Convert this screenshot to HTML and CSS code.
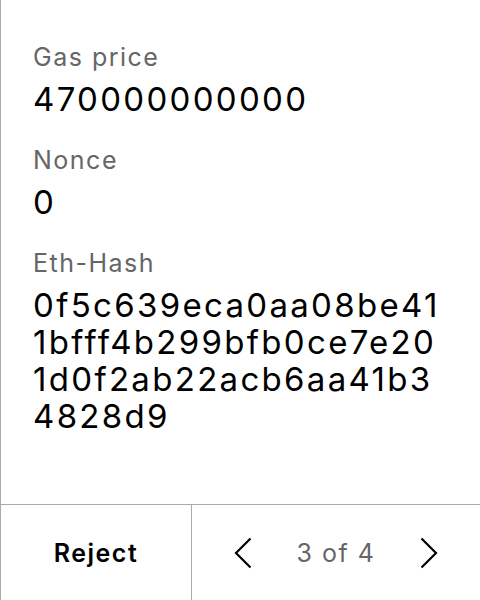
FILE: index.html
```html
<!DOCTYPE html>
<html lang="en">
<head>
<meta charset="utf-8">
<title>Transaction details</title>
<link rel="stylesheet" href="styles.css">
</head>
<body>
<div class="screen">
  <main class="details">
    <div class="field">
      <div class="label">Gas price</div>
      <div class="value">470000000000</div>
    </div>
    <div class="field">
      <div class="label">Nonce</div>
      <div class="value">0</div>
    </div>
    <div class="field">
      <div class="label">Eth-Hash</div>
      <div class="value hash">0f5c639eca0aa08be411bfff4b299bfb0ce7e201d0f2ab22acb6aa41b34828d9</div>
    </div>
  </main>
  <footer class="actions">
    <button class="reject">Reject</button>
    <div class="pager">
      <button class="nav" aria-label="Previous">
        <svg width="18" height="32" viewBox="0 0 18 32"><path d="M16.5 1.5 L2 16 L16.5 30.5" fill="none" stroke="#000" stroke-width="2.2"/></svg>
      </button>
      <span class="count">3 of 4</span>
      <button class="nav" aria-label="Next">
        <svg width="18" height="32" viewBox="0 0 18 32"><path d="M1.5 1.5 L16 16 L1.5 30.5" fill="none" stroke="#000" stroke-width="2.2"/></svg>
      </button>
    </div>
  </footer>
</div>
</body>
</html>
```
FILE: styles.css
```css
* { box-sizing: border-box; }
html, body {
  margin: 0;
  padding: 0;
  background: #fff;
}
body {
  font-family: Inter, "Noto Sans", sans-serif;
  color: #000;
}
.screen {
  width: 480px;
  height: 600px;
  display: flex;
  flex-direction: column;
  border-left: 1px solid #aaa;
}
.details {
  flex: 1;
  padding: 42px 30px 0 32px;
}
.field {
  margin-bottom: 27px;
}
.label {
  font-size: 25px;
  line-height: 30px;
  letter-spacing: 0.06em;
  color: #666;
  margin-bottom: 9px;
}
.value {
  font-size: 33px;
  line-height: 37px;
  letter-spacing: 0.07em;
  color: #000;
}
.hash {
  word-break: break-all;
}
.actions {
  height: 96px;
  border-top: 1px solid #aaa;
  display: flex;
}
button {
  font-family: inherit;
  background: none;
  border: 0;
  padding: 0;
  color: inherit;
  cursor: pointer;
}
.reject {
  width: 191px;
  border-right: 1px solid #aaa;
  font-size: 25px;
  font-weight: 600;
  letter-spacing: 0.06em;
  text-align: center;
}
.pager {
  flex: 1;
  display: flex;
  align-items: center;
  justify-content: center;
  gap: 45px;
}
.nav {
  display: flex;
  align-items: center;
}
.count {
  font-size: 25px;
  letter-spacing: 0.06em;
  color: #666;
}
```
